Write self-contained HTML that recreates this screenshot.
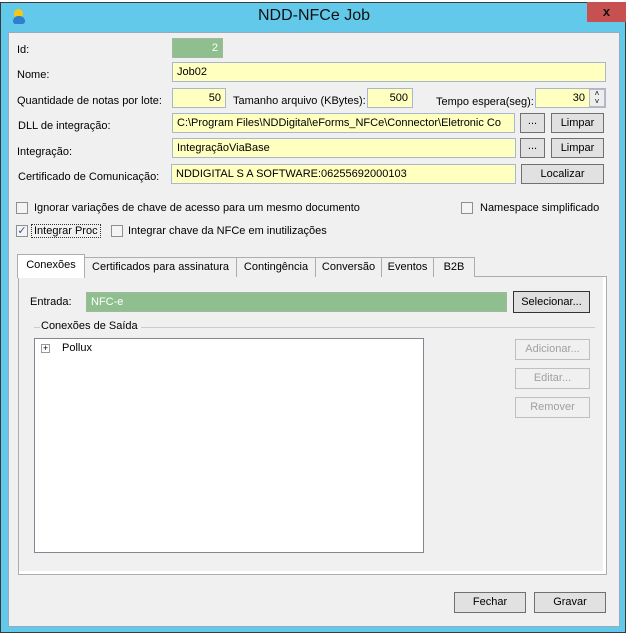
<!DOCTYPE html>
<html><head><meta charset="utf-8"><style>
*{box-sizing:border-box;margin:0;padding:0}
body{width:628px;height:635px;background:#fff;position:relative;overflow:hidden;font-family:"Liberation Sans",sans-serif;font-size:11px;color:#000}
.a{position:absolute}
.win{left:0;top:2px;width:626px;height:631px;background:#62c9ea;border:1px solid #3a3a3a}
.client{left:8px;top:32px;width:612px;height:595px;background:#f0f0f0;border:1px solid #9ab}
.title{left:0;top:7px;width:628px;text-align:center;font-size:16px;color:#111}
.close{left:587px;top:2px;width:39px;height:20px;background:#c75050;color:#111;font-weight:bold;text-align:center;font-size:13px;line-height:20px}
.lbl{font-size:11px;white-space:nowrap}
.tb{background:#ffffc0;border:1px solid #a7b7d0;font-size:11px;padding:3px 4px;line-height:13px;white-space:nowrap;overflow:hidden}
.r{text-align:right}
.btn{background:#e1e1e1;border:1px solid #707070;text-align:center;font-size:11px;line-height:18px}
.dis{color:#a0a0a0;border-color:#bfbfbf;background:#f0f0f0}
.cb{width:12px;height:12px;border:1px solid #8f8f8f;background:#f4f4f4}
.tab{top:257px;height:20px;border:1px solid #adadad;border-bottom:none;background:#f0f0f0;text-align:center;line-height:18px;font-size:11px}
</style></head><body>
<div class="a win"></div>
<div class="a" style="left:14px;top:9px;width:9px;height:8px;border-radius:5px 5px 2px 2px;background:#f2c81c"></div>
<div class="a" style="left:13px;top:16px;width:12px;height:8px;border-radius:6px 6px 3px 3px;background:#2e7fd0"></div>
<div class="a title">NDD-NFCe Job</div>
<div class="a close">x</div>
<div class="a client"></div>

<div class="a lbl" style="left:17px;top:44px">Id:</div>
<div class="a tb r" style="left:172px;top:38px;width:51px;height:20px;background:#8fbf8f;color:#fff;border-color:#a0b8a0">2</div>
<div class="a lbl" style="left:17px;top:69px">Nome:</div>
<div class="a tb" style="left:172px;top:62px;width:434px;height:20px">Job02</div>
<div class="a lbl" style="left:17px;top:95px">Quantidade de notas por lote:</div>
<div class="a tb r" style="left:172px;top:88px;width:54px;height:20px">50</div>
<div class="a lbl" style="left:233px;top:95px">Tamanho arquivo (KBytes):</div>
<div class="a tb r" style="left:367px;top:88px;width:46px;height:20px">500</div>
<div class="a lbl" style="left:436px;top:96px">Tempo espera(seg):</div>
<div class="a tb r" style="left:535px;top:88px;width:71px;height:20px;padding-right:20px">30</div>
<div class="a" style="left:589px;top:89px;width:16px;height:18px;background:#eee;border:1px solid #bbb;font-size:8px;line-height:8px;text-align:center">˄<br>˅</div>
<div class="a lbl" style="left:18px;top:120px">DLL de integração:</div>
<div class="a tb" style="left:172px;top:113px;width:343px;height:20px">C:\Program Files\NDDigital\eForms_NFCe\Connector\Eletronic Co</div>
<div class="a btn" style="left:520px;top:113px;width:25px;height:20px;line-height:14px">...</div>
<div class="a btn" style="left:551px;top:113px;width:53px;height:20px">Limpar</div>
<div class="a lbl" style="left:17px;top:146px">Integração:</div>
<div class="a tb" style="left:172px;top:138px;width:344px;height:20px">IntegraçãoViaBase</div>
<div class="a btn" style="left:520px;top:138px;width:25px;height:20px;line-height:14px">...</div>
<div class="a btn" style="left:551px;top:138px;width:53px;height:20px">Limpar</div>
<div class="a lbl" style="left:18px;top:171px">Certificado de Comunicação:</div>
<div class="a tb" style="left:171px;top:164px;width:345px;height:20px">NDDIGITAL S A SOFTWARE:06255692000103</div>
<div class="a btn" style="left:521px;top:164px;width:83px;height:20px">Localizar</div>

<div class="a cb" style="left:16px;top:202px"></div>
<div class="a lbl" style="left:34px;top:202px">Ignorar variações de chave de acesso para um mesmo documento</div>
<div class="a cb" style="left:461px;top:202px"></div>
<div class="a lbl" style="left:480px;top:202px">Namespace simplificado</div>
<div class="a cb" style="left:16px;top:225px;font-size:11px;line-height:10px;color:#3a5a9a;text-align:center">✓</div>
<div class="a lbl" style="left:31px;top:224px;border:1px dotted #333;padding:0 2px">Integrar Proc</div>
<div class="a cb" style="left:111px;top:225px"></div>
<div class="a lbl" style="left:128px;top:225px">Integrar chave da NFCe em inutilizações</div>

<div class="a" style="left:18px;top:276px;width:589px;height:299px;border:1px solid #adadad;background:#fff"></div>
<div class="a" style="left:19px;top:277px;width:584px;height:294px;background:#f0f0f0"></div>
<div class="a tab" style="left:84px;width:153px">Certificados para assinatura</div>
<div class="a tab" style="left:236px;width:80px">Contingência</div>
<div class="a tab" style="left:315px;width:67px">Conversão</div>
<div class="a tab" style="left:381px;width:53px">Eventos</div>
<div class="a tab" style="left:433px;width:42px">B2B</div>
<div class="a tab" style="left:17px;top:254px;width:68px;height:24px;background:#fff;line-height:20px">Conexões</div>

<div class="a lbl" style="left:30px;top:296px">Entrada:</div>
<div class="a tb" style="left:86px;top:292px;width:421px;height:20px;background:#8fbf8f;color:#fff;border-color:#a0b8a0">NFC-e</div>
<div class="a btn" style="left:513px;top:291px;width:77px;height:22px;line-height:20px;background:#e0e0e0;border-color:#333">Selecionar...</div>
<div class="a" style="left:34px;top:327px;width:561px;height:1px;background:#ccc"></div>
<div class="a lbl" style="left:40px;top:320px;background:#f0f0f0;padding:0 3px 0 1px">Conexões de Saída</div>
<div class="a" style="left:34px;top:338px;width:390px;height:215px;background:#fff;border:1px solid #828790"></div>
<div class="a" style="left:41px;top:344px;width:9px;height:9px;border:1px solid #999;font-size:9px;line-height:7px;text-align:center">+</div>
<div class="a lbl" style="left:62px;top:342px">Pollux</div>
<div class="a btn dis" style="left:515px;top:339px;width:75px;height:21px">Adicionar...</div>
<div class="a btn dis" style="left:515px;top:368px;width:75px;height:21px">Editar...</div>
<div class="a btn dis" style="left:515px;top:397px;width:75px;height:21px">Remover</div>

<div class="a btn" style="left:454px;top:592px;width:72px;height:21px">Fechar</div>
<div class="a btn" style="left:534px;top:592px;width:72px;height:21px">Gravar</div>
</body></html>
